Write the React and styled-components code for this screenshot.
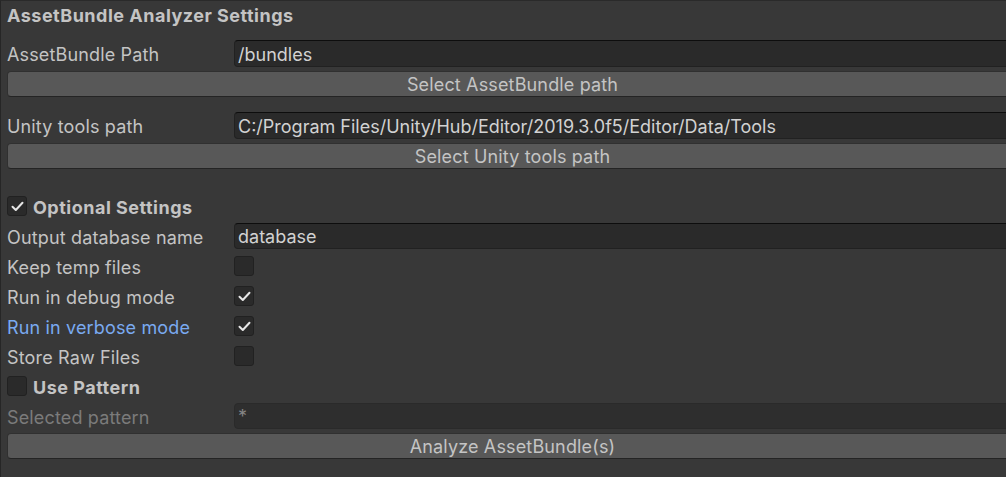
import styled, { createGlobalStyle } from 'styled-components';

const GlobalStyle = createGlobalStyle`
  html, body {
    margin: 0;
    padding: 0;
    background: #383838;
    overflow: hidden;
  }
`;

const CheckIcon = () => (
  <svg width="13" height="11" viewBox="0 0 13 11">
    <path
      d="M1.5 5.8 L4.8 9 L11.5 1.8"
      fill="none"
      stroke="#e6e6e6"
      strokeWidth="2"
      strokeLinecap="round"
      strokeLinejoin="round"
    />
  </svg>
);

const Checkbox = ({ checked }) => (
  <StyledCheckbox>{checked && <CheckIcon />}</StyledCheckbox>
);

const App = () => {
  return (
    <>
      <GlobalStyle />
      <StyledPanel>
        <StyledTitle>AssetBundle Analyzer Settings</StyledTitle>

        <StyledFieldRow $top={10}>
          <StyledLabel>AssetBundle Path</StyledLabel>
          <StyledField>/bundles</StyledField>
        </StyledFieldRow>
        <StyledButton>Select AssetBundle path</StyledButton>

        <StyledFieldRow $top={15}>
          <StyledLabel>Unity tools path</StyledLabel>
          <StyledField>C:/Program Files/Unity/Hub/Editor/2019.3.0f5/Editor/Data/Tools</StyledField>
        </StyledFieldRow>
        <StyledButton>Select Unity tools path</StyledButton>

        <StyledSection>
          <StyledToggleRow>
            <Checkbox checked />
            <StyledSectionTitle>Optional Settings</StyledSectionTitle>
          </StyledToggleRow>
          <StyledRow>
            <StyledLabel>Output database name</StyledLabel>
            <StyledField $small>database</StyledField>
          </StyledRow>
          <StyledRow>
            <StyledLabel>Keep temp files</StyledLabel>
            <Checkbox />
          </StyledRow>
          <StyledRow>
            <StyledLabel>Run in debug mode</StyledLabel>
            <Checkbox checked />
          </StyledRow>
          <StyledRow>
            <StyledLabel $focused>Run in verbose mode</StyledLabel>
            <Checkbox checked />
          </StyledRow>
          <StyledRow>
            <StyledLabel>Store Raw Files</StyledLabel>
            <Checkbox />
          </StyledRow>
          <StyledToggleRow>
            <Checkbox />
            <StyledSectionTitle>Use Pattern</StyledSectionTitle>
          </StyledToggleRow>
          <StyledRow>
            <StyledLabel $disabled>Selected pattern</StyledLabel>
            <StyledField $small $disabled>*</StyledField>
          </StyledRow>
        </StyledSection>
        <StyledButton $top={2}>Analyze AssetBundle(s)</StyledButton>
      </StyledPanel>
    </>
  );
};

const StyledPanel = styled.div`
  display: flex;
  flex-direction: column;
  width: 1018px;
  height: 477px;
  padding-left: 6px;
  border-left: 1px solid #262626;
  border-top: 1px solid #2a2a2a;
  box-sizing: border-box;
  background: #383838;

  font-family: Inter, 'Noto Sans', sans-serif;
  font-size: 18px;
  color: #c4c4c4;
`;

const StyledTitle = styled.div`
  height: 29px;
  display: flex;
  align-items: center;
  font-weight: bold;
  letter-spacing: 0.5px;
`;

const StyledFieldRow = styled.div`
  display: grid;
  grid-template-columns: 227px 1fr;
  align-items: center;
  height: 27px;
  margin-top: ${(p) => p.$top}px;
`;

const StyledRow = styled.div`
  display: grid;
  grid-template-columns: 227px 1fr;
  align-items: center;
  height: 30px;
`;

const StyledToggleRow = styled.div`
  display: flex;
  align-items: center;
  gap: 6px;
  height: 30px;
`;

const StyledSection = styled.div`
  display: flex;
  flex-direction: column;
  margin-top: 22px;
`;

const StyledLabel = styled.span`
  padding-top: 2px;
  letter-spacing: 0.15px;
  white-space: nowrap;
  color: ${(p) => (p.$focused ? '#7aaaf0' : p.$disabled ? '#7b7b7b' : '#c4c4c4')};
`;

const StyledSectionTitle = styled.span`
  padding-top: 2px;
  font-weight: bold;
  letter-spacing: 0.5px;
`;

const StyledField = styled.div`
  height: ${(p) => (p.$small ? 26 : 27)}px;
  box-sizing: border-box;
  display: flex;
  align-items: center;
  padding: 1px 0 0 3px;
  border: 1px solid ${(p) => (p.$disabled ? '#2a2a2a' : '#212121')};
  border-top-color: ${(p) => (p.$disabled ? '#2a2a2a' : '#0d0d0d')};
  border-radius: 4px;
  background: ${(p) => (p.$disabled ? '#2e2e2e' : '#2a2a2a')};
  color: ${(p) => (p.$disabled ? '#858585' : '#d2d2d2')};
  letter-spacing: 0;
  white-space: nowrap;
  overflow: hidden;
`;

const StyledButton = styled.div`
  height: 26px;
  margin-top: ${(p) => p.$top ?? 4}px;
  box-sizing: border-box;
  display: flex;
  align-items: center;
  justify-content: center;
  padding-top: 1px;
  border: 1px solid #303030;
  border-bottom-color: #242424;
  border-radius: 4px;
  background: #585858;
  color: #c4c4c4;
  letter-spacing: 0.15px;
`;

const StyledCheckbox = styled.div`
  width: 20px;
  height: 20px;
  box-sizing: border-box;
  display: flex;
  align-items: center;
  justify-content: center;
  border: 1px solid #212121;
  border-radius: 3px;
  background: #2a2a2a;
`;

export default App;
